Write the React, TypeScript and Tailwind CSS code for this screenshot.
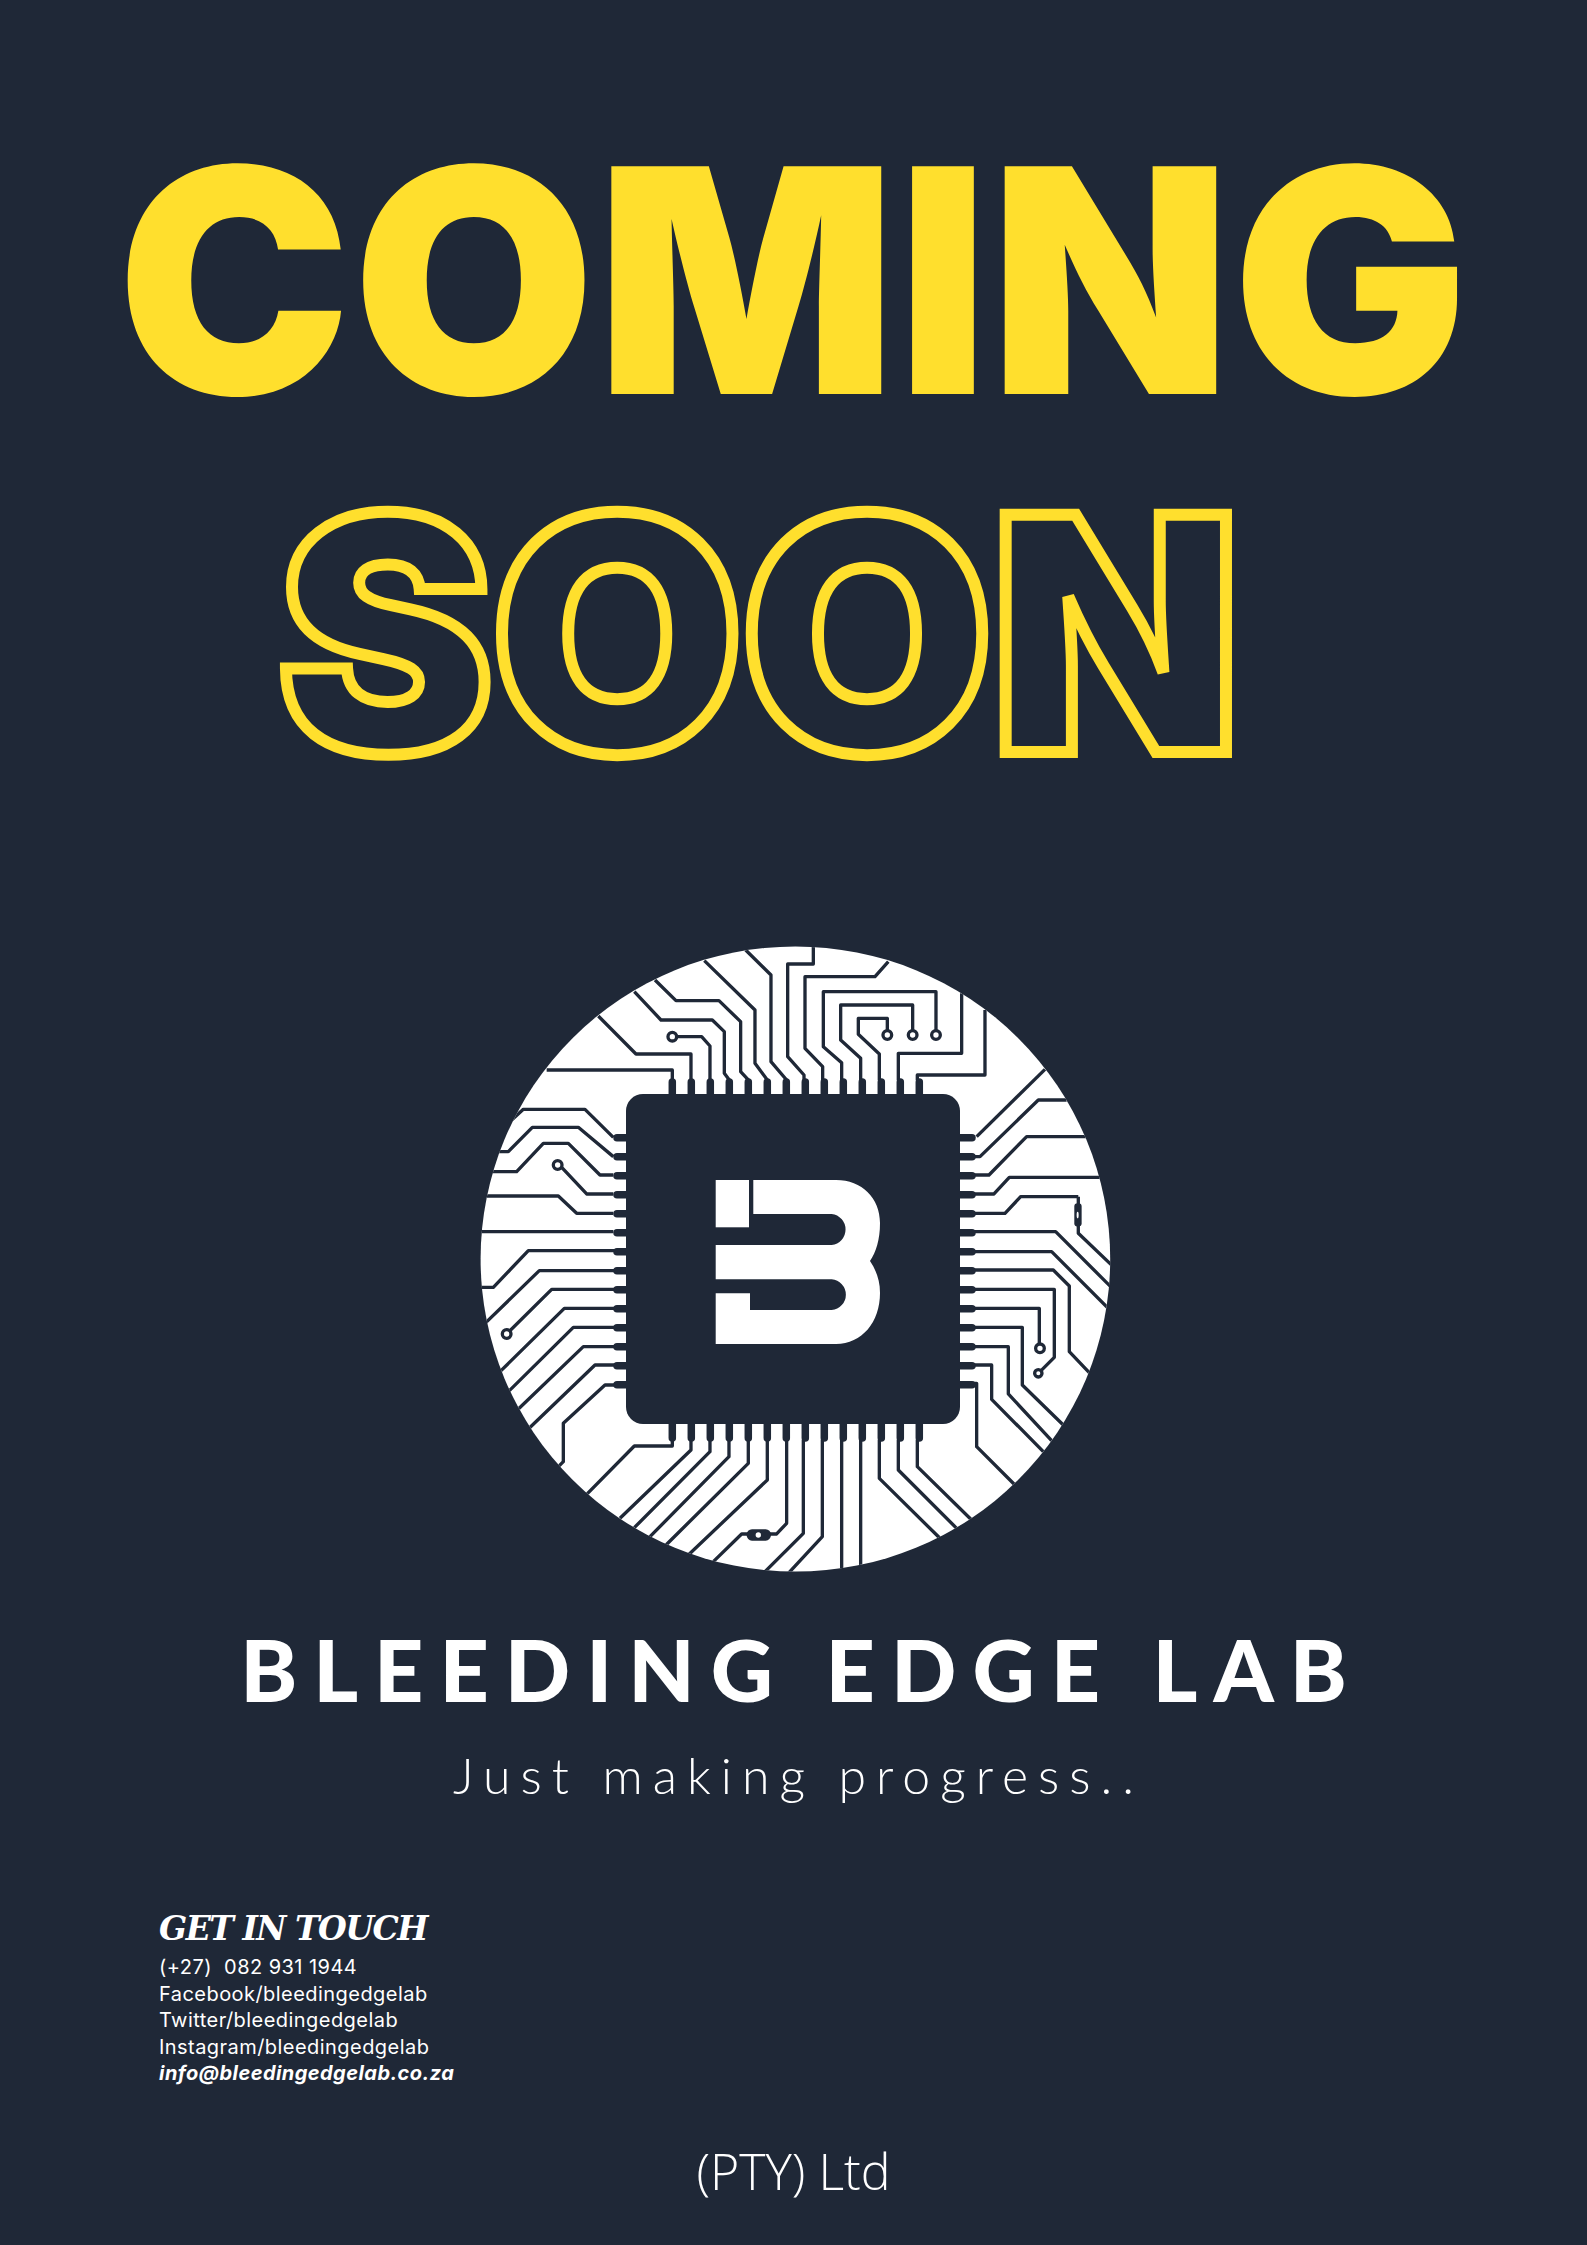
const BOARD_BG = "#1f2837";

const PIN_STEP = 19;
const topPins = Array.from({ length: 14 }, (_, i) => 672.3 + i * PIN_STEP);
const sidePins = Array.from({ length: 14 }, (_, i) => 1137.7 + i * PIN_STEP);

// traces are written in the coordinates of each traced quadrant (3x page px)
const traceTopLeft = [
  "M370 228 L483 342 H648 V420",
  "M215 390 H592 V420",
  "M592 290 H680 L705 318 V420",
  "M478 155 L558 240 H712 L748 275 V400 L763 420",
  "M540 120 L603 182 H732 L797 245 V395 L820 420",
  "M688 62 L840 210 V370 L877 420",
  "M812 30 L888 105 V365 L935 420",
  "M415 592 L330 508 H145 L110 540",
  "M415 650 L310 562 H172 L100 635 H60",
  "M415 705 H375 L280 610 H205 L125 695 H40",
  "M415 762 H335 L258 680",
  "M415 820 H305 L250 768 H20",
  "M415 875 H10",
];

const traceTopRight = [
  "M70 10 V72 H-7 V350 L42 405 V420",
  "M295 65 L255 110 H45 V325 L98 380 V420",
  "M438 285 V155 H100 V320 L155 368 V420",
  "M368 285 V195 H152 V300 L212 355 V420",
  "M292 285 V235 H205 V283 L268 342 V420",
  "M515 160 V340 H325 V420",
  "M585 210 V405 H382 V420",
  "M765 388 L560 590",
  "M830 480 H745 L570 650 H545",
  "M890 590 H710 L597 705 H545",
  "M930 712 H658 L612 762 H545",
  "M865 770 H692 L645 820 H545",
  "M865 770 V880 L975 985",
  "M545 875 H797 L975 1053",
];

const traceBottomRight = [
  "M545 5 H785 L960 180",
  "M545 60 H790 L838 108 V305 L900 370",
  "M545 118 H793 V322 L745 370",
  "M545 175 H748 V295",
  "M545 232 H697 V405 L820 525",
  "M545 290 H655 V432 L785 572",
  "M545 345 H605 V448 L760 605",
  "M545 400 H560 V590 L675 705",
  "M382 570 V650 L545 810",
  "M325 570 V660 L500 835",
  "M268 570 V685 L450 865",
  "M212 570 V950",
  "M155 570 V960",
  "M97 570 V860 L-5 970",
  "M40 570 V850 L-80 970",
];

const traceBottomLeft = [
  "M420 2 H160 L55 112 H10",
  "M420 62 H193 L30 220",
  "M420 118 H230 L95 252",
  "M420 175 H268 L75 365",
  "M420 232 H295 L100 425",
  "M420 290 H325 L127 480",
  "M420 345 H360 L160 537",
  "M420 405 H390 L265 520 V635 L245 655",
  "M592 570 V588 H478 L335 733",
  "M648 570 V600 L435 805",
  "M705 570 V605 L478 833",
  "M762 570 V620 L525 860",
  "M820 570 V640 L573 885",
  "M877 570 V690 L640 915",
  "M935 570 V820 L905 852 H800 L715 935",
];

function Traces({ x, y, paths }: { x: number; y: number; paths: string[] }) {
  return (
    <g transform={`translate(${x} ${y}) scale(0.3333)`} fill="none" stroke={BOARD_BG} strokeWidth="10" strokeLinejoin="round">
      {paths.map((d) => (
        <path key={d} d={d} />
      ))}
    </g>
  );
}

function Pad({ cx, cy, r = 13 }: { cx: number; cy: number; r?: number }) {
  return <circle cx={cx} cy={cy} r={r} fill="white" stroke={BOARD_BG} strokeWidth="10" />;
}

function ChipLogo() {
  return (
    <svg viewBox="475 940 645 640" className="h-[640px] w-[645px] shrink-0" aria-hidden="true">
      <defs>
        <clipPath id="disc">
          <ellipse cx="795.4" cy="1259" rx="314.8" ry="312.6" />
        </clipPath>
      </defs>
      <ellipse cx="795.4" cy="1259" rx="314.8" ry="312.6" fill="white" />
      <g clipPath="url(#disc)">
        <Traces x={475} y={940} paths={traceTopLeft} />
        <Traces x={790} y={940} paths={traceTopRight} />
        <Traces x={790} y={1250} paths={traceBottomRight} />
        <Traces x={475} y={1250} paths={traceBottomLeft} />

        <g transform="translate(475 940) scale(0.3333)">
          <Pad cx={592} cy={290} />
          <Pad cx={248} cy={675} />
        </g>
        <g transform="translate(790 940) scale(0.3333)">
          <Pad cx={292} cy={285} />
          <Pad cx={368} cy={285} />
          <Pad cx={438} cy={285} />
          <rect x="853" y="790" width="22" height="70" rx="10" fill={BOARD_BG} />
          <ellipse cx="863" cy="825" rx="3" ry="10" fill="white" />
        </g>
        <g transform="translate(790 1250) scale(0.3333)">
          <Pad cx={750} cy={295} />
          <Pad cx={745} cy={370} r={11} />
        </g>
        <g transform="translate(475 1250) scale(0.3333)">
          <Pad cx={95} cy={252} />
          <rect x="815" y="838" width="73" height="34" rx="16" fill={BOARD_BG} />
          <circle cx="850" cy="855" r="8" fill="white" />
        </g>
      </g>

      <g stroke={BOARD_BG} strokeWidth="7.5" strokeLinecap="round">
        {topPins.map((x) => (
          <g key={x}>
            <line x1={x} y1="1096" x2={x} y2="1082" />
            <line x1={x} y1="1424" x2={x} y2="1438" />
          </g>
        ))}
        {sidePins.map((y) => (
          <g key={y}>
            <line x1="626" y1={y} x2="617" y2={y} />
            <line x1="960" y1={y} x2="972" y2={y} />
          </g>
        ))}
      </g>

      <rect x="626" y="1094" width="334" height="330" rx="17" fill={BOARD_BG} />

      <g fill="white">
        <rect x="715.7" y="1180" width="33.3" height="47.3" />
        <path d="M753.3 1180 H836 C862 1180 880 1198 880 1223 C880 1240 876 1252 870 1261 C876 1270 880 1280 880 1293 C880 1322 862 1344 836 1344 H715.7 V1293.3 H750 V1310 H831.7 A15.4 15.4 0 0 0 831.7 1279.3 H715.7 V1245 H831.7 A15.6 15.6 0 0 0 831.7 1214 H753.3 Z" />
      </g>
    </svg>
  );
}

export default function App() {
  return (
    <div className="flex h-[2245px] w-[1587px] flex-col overflow-hidden bg-[#1f2837] text-white">
      <header className="flex flex-col items-center pt-[124px]">
        <h1 className="font-['Inter',sans-serif] text-[313px] leading-[313px] font-black tracking-[1.5px] text-[#ffdf2d]">
          COMING
        </h1>
        <h2 className="mt-[34px] mr-[72px] font-['Inter',sans-serif] text-[326px] leading-[326px] font-black tracking-[-3px] text-transparent [-webkit-text-stroke:12px_#ffdf2d]">
          SOON
        </h2>
      </header>

      <div className="mt-[143px] flex justify-center pl-[8px]">
        <ChipLogo />
      </div>

      <section className="mt-[39px] flex flex-col items-center">
        <p className="pl-[16px] font-['Lato',sans-serif] text-[86px] leading-[100px] font-black tracking-[16px] uppercase">Bleeding Edge Lab</p>
        <p className="mt-[26px] pl-[10px] font-['Lato',sans-serif] text-[50px] leading-[60px] font-light tracking-[10px]">Just making progress..</p>
      </section>

      <address className="mt-[99px] flex flex-col pl-[159px] not-italic">
        <h3 className="font-['DejaVu_Serif',serif] text-[33px] leading-[50px] font-bold tracking-[-1.5px] italic">GET IN TOUCH</h3>
        <div className="font-['Inter',sans-serif] text-[20px] leading-[26.6px] tracking-[0.45px]">
          <p>(+27)&nbsp; 082 931 1944</p>
          <p>Facebook/bleedingedgelab</p>
          <p>Twitter/bleedingedgelab</p>
          <p>Instagram/bleedingedgelab</p>
          <p className="font-bold italic">info@bleedingedgelab.co.za</p>
        </div>
      </address>

      <footer className="mt-[50px] flex justify-center">
        <p className="font-['Open_Sans',sans-serif] text-[50px] leading-[68px] font-light">(PTY) Ltd</p>
      </footer>
    </div>
  );
}
